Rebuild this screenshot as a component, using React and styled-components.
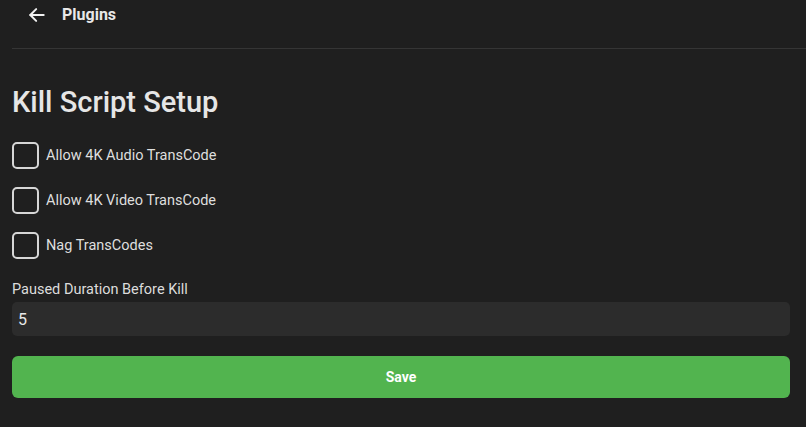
import React, { useState } from "react";
import styled, { createGlobalStyle } from "styled-components";

const GlobalStyle = createGlobalStyle`
  html, body {
    margin: 0;
    padding: 0;
    background: #1f1f1f;
    font-family: Roboto, "Noto Sans", sans-serif;
    color: #e6e6e6;
  }
  * { box-sizing: border-box; }
`;

const Page = styled.div`
  width: 806px;
  height: 427px;
  overflow: hidden;
  background: #1f1f1f;
  padding-left: 12px;
`;

const Header = styled.div`
  display: flex;
  align-items: center;
  gap: 15px;
  height: 49px;
  padding: 0 0 19px 15px;
  border-bottom: 1px solid #353535;
`;

const BackButton = styled.button`
  display: flex;
  align-items: center;
  background: none;
  border: none;
  padding: 0;
  color: #f2f2f2;
  cursor: pointer;
`;

const HeaderTitle = styled.span`
  font-size: 16px;
  font-weight: 700;
  color: #e8e8e8;
`;

const Content = styled.div`
  padding: 36px 16px 0 0;
  display: flex;
  flex-direction: column;
`;

const Title = styled.h1`
  margin: 0 0 23px;
  font-size: 29px;
  font-weight: 500;
  line-height: 34px;
  color: #e6e6e6;
`;

const CheckList = styled.div`
  display: flex;
  flex-direction: column;
  gap: 18px;
  margin-bottom: 23px;
`;

const CheckRow = styled.label`
  display: flex;
  align-items: center;
  gap: 7px;
  font-size: 14.5px;
  color: #dedede;
  cursor: pointer;
`;

const Box = styled.span`
  width: 27px;
  height: 27px;
  border: 2px solid ${(p) => (p.$checked ? "#52b44f" : "#d6d6d6")};
  background: ${(p) => (p.$checked ? "#52b44f" : "transparent")};
  border-radius: 5px;
  flex-shrink: 0;
`;

const FieldLabel = styled.div`
  font-size: 14.5px;
  color: #dcdcdc;
  margin-bottom: 4px;
  line-height: 16px;
`;

const Input = styled.input`
  width: 100%;
  height: 34px;
  background: #2c2c2c;
  border: none;
  border-radius: 5px;
  color: #e8e8e8;
  font-family: Roboto, "Noto Sans", sans-serif;
  font-size: 16px;
  padding: 0 6px;
  outline: none;
  margin-bottom: 20px;
`;

const SaveButton = styled.button`
  width: 100%;
  height: 42px;
  background: #52b44f;
  border: none;
  border-radius: 6px;
  color: #ffffff;
  font-family: Roboto, "Noto Sans", sans-serif;
  font-size: 14px;
  font-weight: 700;
  cursor: pointer;
`;

const options = [
  "Allow 4K Audio TransCode",
  "Allow 4K Video TransCode",
  "Nag TransCodes",
];

export default function App() {
  const [checked, setChecked] = useState([false, false, false]);
  const [duration, setDuration] = useState("5");

  const toggle = (i) =>
    setChecked((c) => c.map((v, j) => (j === i ? !v : v)));

  return (
    <>
      <GlobalStyle />
      <Page>
        <Header>
          <BackButton aria-label="Back">
            <svg width="20" height="20" viewBox="0 0 24 24" fill="none" stroke="currentColor" strokeWidth="2.4" strokeLinecap="round" strokeLinejoin="round">
              <path d="M20 12H4" />
              <path d="M11 5l-7 7 7 7" />
            </svg>
          </BackButton>
          <HeaderTitle>Plugins</HeaderTitle>
        </Header>
        <Content>
          <Title>Kill Script Setup</Title>
          <CheckList>
            {options.map((o, i) => (
              <CheckRow key={o} onClick={() => toggle(i)}>
                <Box $checked={checked[i]} />
                {o}
              </CheckRow>
            ))}
          </CheckList>
          <FieldLabel>Paused Duration Before Kill</FieldLabel>
          <Input value={duration} onChange={(e) => setDuration(e.target.value)} />
          <SaveButton>Save</SaveButton>
        </Content>
      </Page>
    </>
  );
}
